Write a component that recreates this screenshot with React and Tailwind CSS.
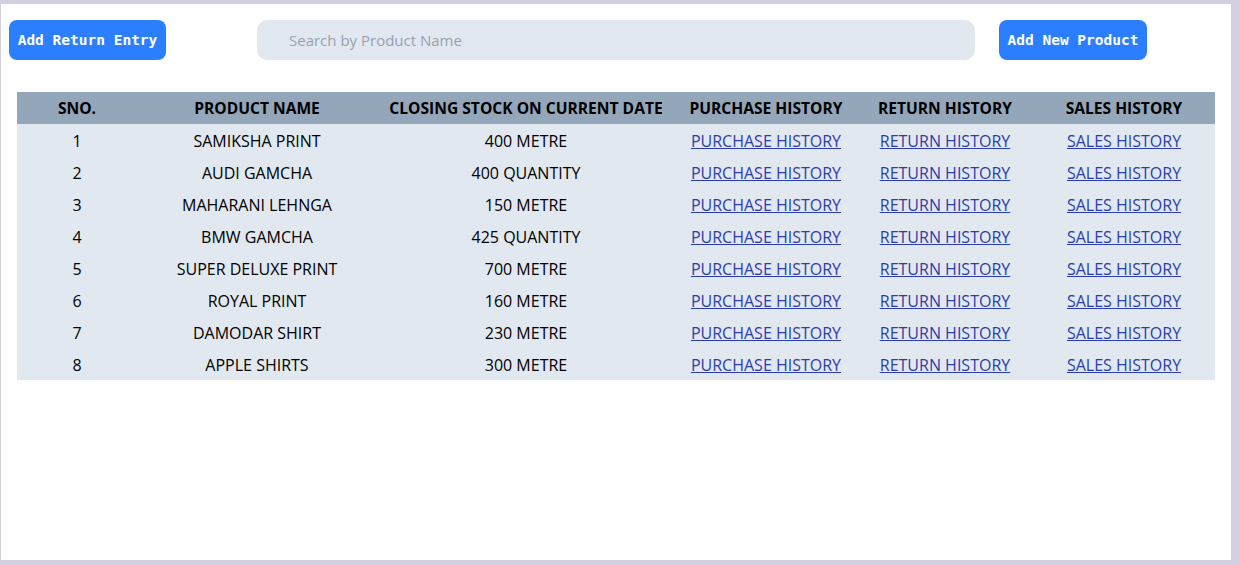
const rows = [
  { sno: 1, name: 'SAMIKSHA PRINT', stock: '400 METRE' },
  { sno: 2, name: 'AUDI GAMCHA', stock: '400 QUANTITY' },
  { sno: 3, name: 'MAHARANI LEHNGA', stock: '150 METRE' },
  { sno: 4, name: 'BMW GAMCHA', stock: '425 QUANTITY' },
  { sno: 5, name: 'SUPER DELUXE PRINT', stock: '700 METRE' },
  { sno: 6, name: 'ROYAL PRINT', stock: '160 METRE' },
  { sno: 7, name: 'DAMODAR SHIRT', stock: '230 METRE' },
  { sno: 8, name: 'APPLE SHIRTS', stock: '300 METRE' },
];

const mono = { fontFamily: '"DejaVu Sans Mono", "Liberation Mono", monospace' };

export default function App() {
  return (
    <div className="h-[565px] bg-[#d3cfe0] pt-[4px] pl-[1px] pr-[8px] pb-[5px]">
      <div className="h-full bg-white font-['Open_Sans',sans-serif]">
        <div className="flex items-center pt-[16px] pl-[8px]">
          <button
            style={mono}
            className="w-[157px] h-[40px] pt-[2px] rounded-lg bg-blue-500 text-white font-bold text-[14.5px]"
          >
            Add Return Entry
          </button>
          <input
            placeholder="Search by Product Name"
            className="ml-[91px] w-[718px] h-[40px] rounded-[10px] bg-slate-200 pl-[32px] text-[15px] placeholder:text-gray-400 outline-none"
          />
          <button
            style={mono}
            className="ml-[24px] w-[148px] h-[40px] pt-[2px] rounded-lg bg-blue-500 text-white font-bold text-[14.5px]"
          >
            Add New Product
          </button>
        </div>

        <div className="px-[16px] pt-[32px]">
          <table className="w-[1198px] border-collapse text-[16px] text-black table-fixed [&_th]:pt-[2px] [&_td]:pt-[2px]">
            <colgroup>
              <col className="w-[120px]" />
              <col className="w-[240px]" />
              <col className="w-[298px]" />
              <col className="w-[182px]" />
              <col className="w-[176px]" />
              <col className="w-[182px]" />
            </colgroup>
            <thead>
              <tr className="bg-[#93a6ba] h-[32px] text-[15.6px]">
                <th className="font-bold">SNO.</th>
                <th className="font-bold">PRODUCT NAME</th>
                <th className="font-bold">CLOSING STOCK ON CURRENT DATE</th>
                <th className="font-bold">PURCHASE HISTORY</th>
                <th className="font-bold">RETURN HISTORY</th>
                <th className="font-bold">SALES HISTORY</th>
              </tr>
            </thead>
            <tbody className="bg-slate-200">
              {rows.map((r) => (
                <tr key={r.sno} className="h-[32px] text-center">
                  <td>{r.sno}</td>
                  <td>{r.name}</td>
                  <td>{r.stock}</td>
                  <td>
                    <a href="#" className="text-[#2b3dab] underline">PURCHASE HISTORY</a>
                  </td>
                  <td>
                    <a href="#" className="text-[#2b3dab] underline">RETURN HISTORY</a>
                  </td>
                  <td>
                    <a href="#" className="text-[#2b3dab] underline">SALES HISTORY</a>
                  </td>
                </tr>
              ))}
            </tbody>
          </table>
        </div>
      </div>
    </div>
  );
}
